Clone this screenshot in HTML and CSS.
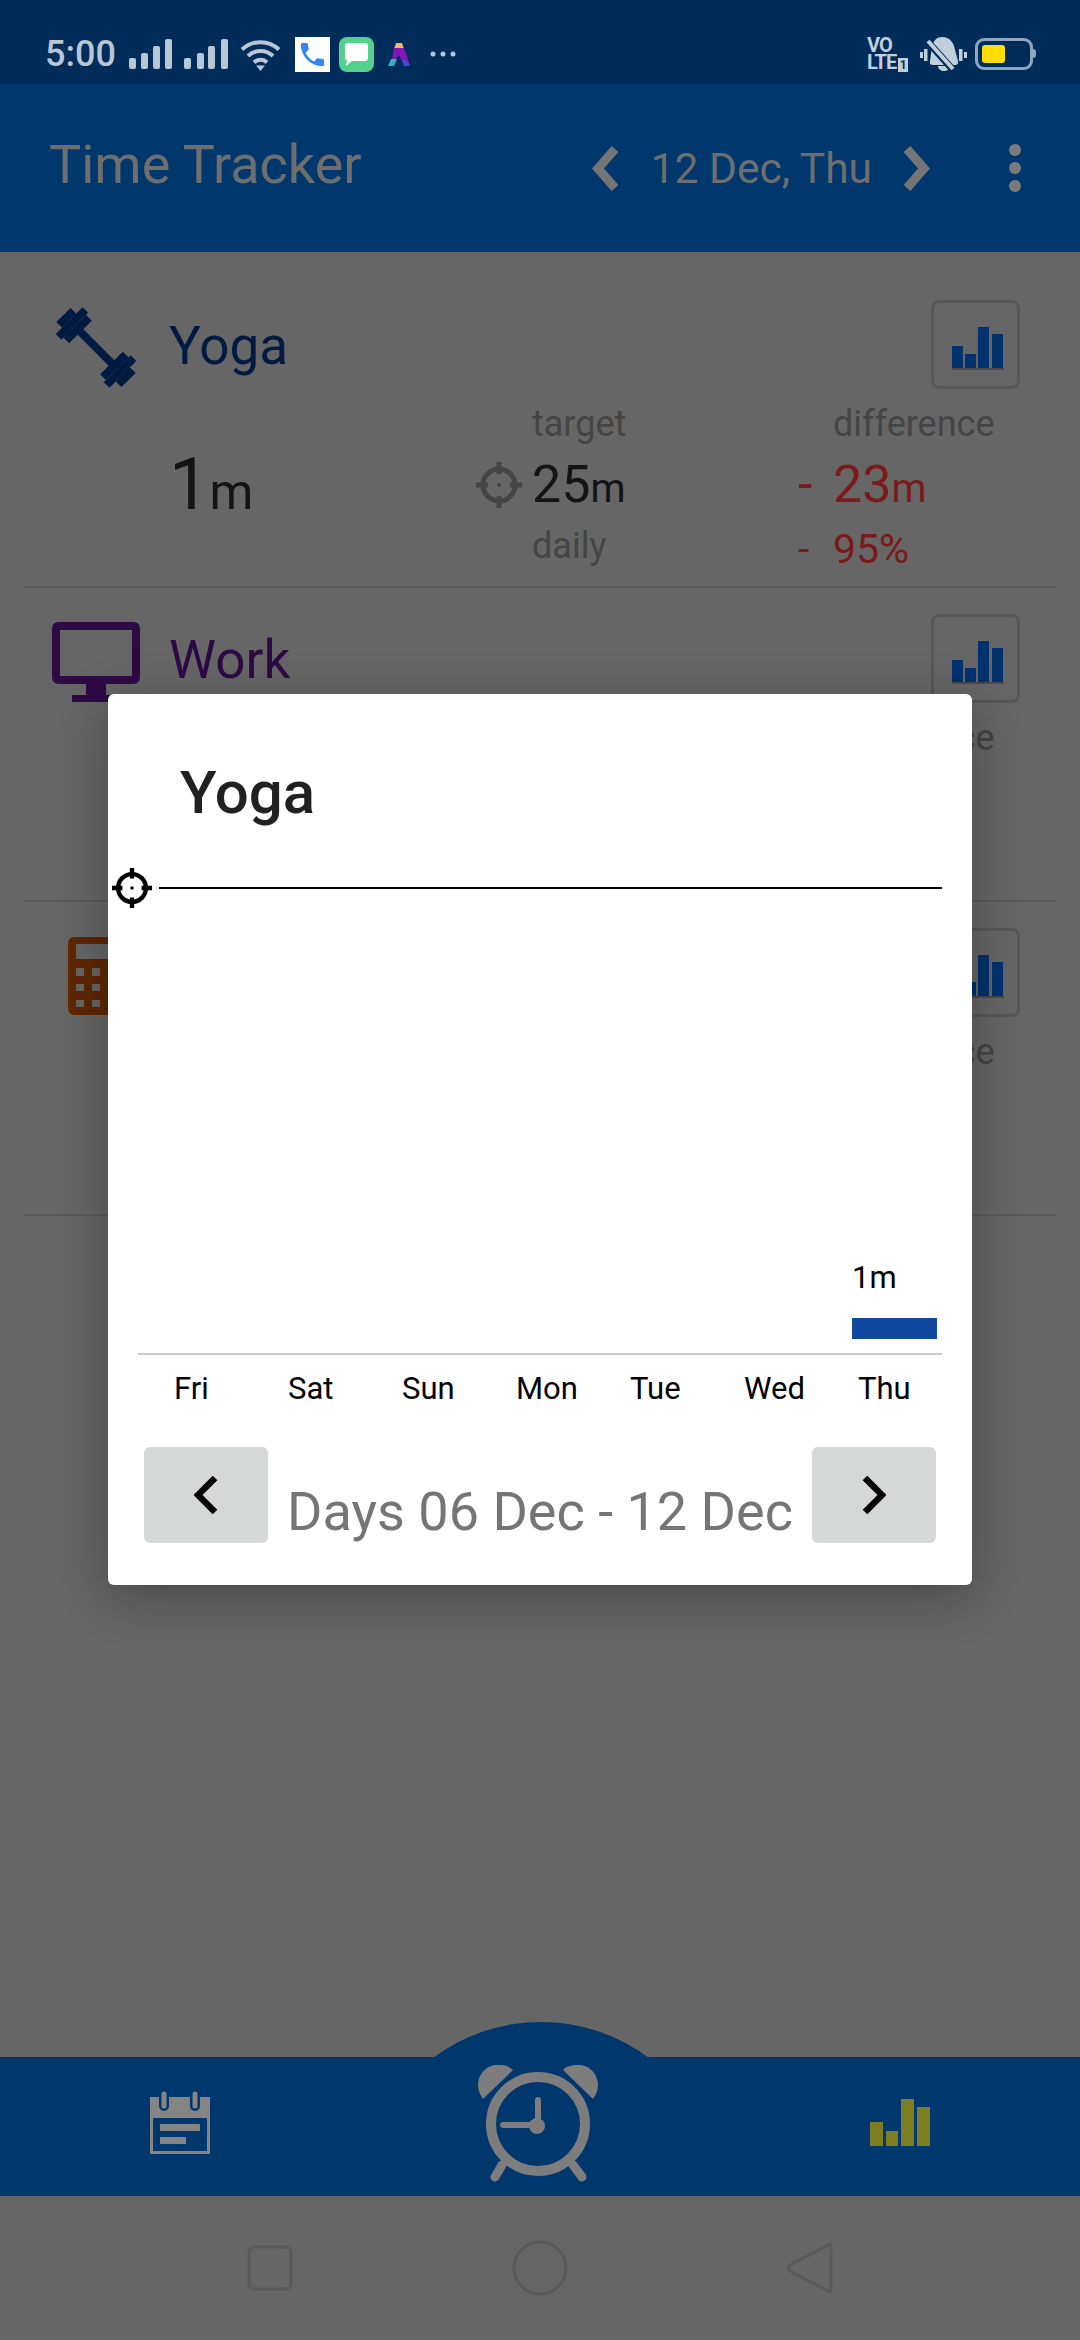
FILE: index.html
```html
<!DOCTYPE html>
<html lang="en">

<head>
  <meta charset="UTF-8">
  <meta name="viewport" content="width=device-width, initial-scale=1.0">
  <title>Time Tracker</title>
  <link rel="stylesheet" href="styles.css">
</head>

<body>
  <div class="status-bar">
    <span class="clock">5:00</span>
    <svg class="signal" width="43" height="30" viewBox="0 0 43 30">
      <rect x="0" y="19" width="7" height="11" rx="2" />
      <rect x="12" y="14" width="7" height="16" rx="2" />
      <rect x="24" y="7" width="7" height="23" rx="2" />
      <rect x="36" y="0" width="7" height="30" rx="2" />
    </svg>
    <svg class="signal second" width="44" height="30" viewBox="0 0 44 30">
      <rect x="0" y="19" width="7" height="11" rx="2" />
      <rect x="13" y="14" width="7" height="16" rx="2" />
      <rect x="24" y="7" width="7" height="23" rx="2" />
      <rect x="37" y="0" width="7" height="30" rx="2" />
    </svg>
    <svg class="wifi" width="41" height="33" viewBox="0 0 41 33">
      <g fill="none" stroke="#b9c6d6" stroke-width="4">
        <path d="M2 11.5 A27 27 0 0 1 39 11.5" />
        <path d="M8 18 A18 18 0 0 1 33 18" />
        <path d="M14 24.5 A9 9 0 0 1 27 24.5" />
      </g>
      <path d="M16 27.5 H25 L20.5 33 Z" fill="#b9c6d6" />
    </svg>
    <span class="app-icon phone">
      <svg width="31" height="31" viewBox="0 0 24 24">
        <path fill="#2f88f5" d="M6.62 10.79c1.44 2.83 3.76 5.14 6.59 6.59l2.2-2.2c.27-.27.67-.36 1.02-.24 1.12.37 2.33.57 3.57.57.55 0 1 .45 1 1V20c0 .55-.45 1-1 1-9.39 0-17-7.61-17-17 0-.55.45-1 1-1h3.5c.55 0 1 .45 1 1 0 1.25.2 2.45.57 3.57.11.35.03.74-.25 1.02l-2.2 2.2z" />
      </svg>
    </span>
    <span class="app-icon messages">
      <svg width="25" height="25" viewBox="0 0 25 25">
        <path fill="#fff" d="M4 1 H21 Q24 1 24 4 V16 Q24 19 21 19 H8 L2 24 L3 18.500 Q1 18 1 16 V4 Q1 1 4 1 Z" />
      </svg>
    </span>
    <svg class="app-logo" width="22" height="23" viewBox="0 0 22 23">
      <path d="M8 0 H14 L16 6 H6 Z" fill="#f4b860" />
      <path d="M6 5 H16 L22 22 H16 L11 12 L7 17 H4 Z" fill="#8316b8" />
      <path d="M3 16 H9 L6 23 H0 Z" fill="#2fb3c4" />
      <path d="M14 17 L18 17 L22 23 H16 Z" fill="#4a46d8" />
    </svg>
    <svg class="more" width="26" height="6" viewBox="0 0 26 6" fill="#b9c6d6">
      <circle cx="3" cy="3" r="2.500" />
      <circle cx="13" cy="3" r="2.500" />
      <circle cx="23" cy="3" r="2.500" />
    </svg>
    <div class="volte">VO<br>LTE<span class="sim">1</span></div>
    <svg class="mute" width="47" height="36" viewBox="0 0 47 36">
      <g fill="#c3cedb">
        <rect x="0" y="16" width="3" height="6" />
        <rect x="4" y="13" width="3.500" height="12" />
        <rect x="39" y="13" width="3.500" height="12" />
        <rect x="44" y="16" width="3" height="6" />
        <path d="M22 1 C30 1 34 7 35 14 L38 25 Q39 29 35 29 H13 Q9 29 10 25 L12 10 C14 4 17 1 22 1 Z" />
        <path d="M18 30 H30 C30 33 27 35 24 35 C21 35 18 33 18 30 Z" />
      </g>
      <path d="M9 7 L34 35" stroke="#002c5a" stroke-width="7" />
      <path d="M8 5 L33 33" stroke="#c3cedb" stroke-width="4" />
    </svg>
    <div class="battery"><div class="battery-fill"></div></div>
  </div>

  <header class="app-bar">
    <h1 class="app-title">Time Tracker</h1>
    <svg class="chevron prev-day" width="27" height="45" viewBox="0 0 27 45">
      <path d="M23 3 L6 22.500 L23 42" />
    </svg>
    <span class="day-label">12 Dec, Thu</span>
    <svg class="chevron next-day" width="27" height="45" viewBox="0 0 27 45">
      <path d="M4 3 L21 22.500 L4 42" />
    </svg>
    <svg class="overflow" width="12" height="48" viewBox="0 0 12 48" fill="#7b7b7b">
      <circle cx="6" cy="6" r="6" />
      <circle cx="6" cy="24" r="6" />
      <circle cx="6" cy="42" r="6" />
    </svg>
  </header>

  <main class="tasks">
    <section class="task">
      <div class="task-head">
        <svg class="task-icon" width="88" height="88" viewBox="0 0 88 88">
          <g fill="#001a42" transform="rotate(45 44 43.500)">
            <rect x="20" y="39.500" width="48" height="8" />
            <rect x="-2" y="33.500" width="8" height="20" />
            <rect x="6" y="24.500" width="8" height="38" />
            <rect x="14" y="27.500" width="8" height="32" />
            <rect x="66" y="27.500" width="8" height="32" />
            <rect x="74" y="24.500" width="8" height="38" />
            <rect x="82" y="33.500" width="8" height="20" />
          </g>
        </svg>
        <span class="task-name yoga">Yoga</span>
        <button class="chart-btn">
          <svg width="52" height="44" viewBox="0 0 52 44">
            <path fill="#003270" d="M0 19 H11 V41 H0 Z M13 27 H24 V41 H13 Z M26 0 H37 V41 H26 Z M40 7 H51 V41 H40 Z" />
            <rect x="0" y="41" width="52" height="2" fill="#4a4a4a" />
          </svg>
        </button>
      </div>
      <div class="stats">
        <span></span>
        <span></span>
        <span class="stat-label">target</span>
        <span></span>
        <span class="stat-label">difference</span>

        <span class="big-value">1<small>m</small></span>
        <svg class="target-icon dim" width="46" height="46" viewBox="0 0 46 46">
          <circle cx="23" cy="23" r="16" />
          <path d="M23 0 V12 M23 34 V46 M0 23 H12 M34 23 H46" />
          <circle class="dot" cx="23" cy="23" r="2" />
        </svg>
        <span class="value">25<small>m</small></span>
        <span class="value minus">-</span>
        <span class="value minus">23<small>m</small></span>

        <span></span>
        <span></span>
        <span class="stat-label">daily</span>
        <span class="percent">-</span>
        <span class="percent">95%</span>
      </div>
    </section>

    <section class="task">
      <div class="task-head">
        <svg class="task-icon" width="88" height="88" viewBox="0 0 88 88">
          <path fill="#2e0a45" fill-rule="evenodd" d="M7 4 H81 Q88 4 88 11 V58 Q88 66 81 66 H54 V77 H68 V84 H20 V77 H34 V66 H7 Q0 66 0 58 V11 Q0 4 7 4 Z M8 12 V58 H80 V12 Z" />
        </svg>
        <span class="task-name work">Work</span>
        <button class="chart-btn">
          <svg width="52" height="44" viewBox="0 0 52 44">
            <path fill="#003270" d="M0 19 H11 V41 H0 Z M13 27 H24 V41 H13 Z M26 0 H37 V41 H26 Z M40 7 H51 V41 H40 Z" />
            <rect x="0" y="41" width="52" height="2" fill="#4a4a4a" />
          </svg>
        </button>
      </div>
      <div class="stats">
        <span></span>
        <span></span>
        <span class="stat-label">target</span>
        <span></span>
        <span class="stat-label">difference</span>
      </div>
    </section>

    <section class="task">
      <div class="task-head">
        <svg class="task-icon" width="88" height="88" viewBox="0 0 88 88">
          <path fill="#5f2700" fill-rule="evenodd" d="M23 5 H73 Q80 5 80 12 V76 Q80 83 73 83 H23 Q16 83 16 76 V12 Q16 5 23 5 Z M24 12 V27 H72 V12 Z M24 36 V44 H32 V36 Z M40 36 V44 H48 V36 Z M56 36 V44 H64 V36 Z M24 52 V59 H32 V52 Z M40 52 V59 H48 V52 Z M56 52 V59 H64 V52 Z M24 68 V75 H32 V68 Z M40 68 V75 H48 V68 Z M56 68 V75 H64 V68 Z" />
        </svg>
        <span class="task-name calc"></span>
        <button class="chart-btn">
          <svg width="52" height="44" viewBox="0 0 52 44">
            <path fill="#003270" d="M0 19 H11 V41 H0 Z M13 27 H24 V41 H13 Z M26 0 H37 V41 H26 Z M40 7 H51 V41 H40 Z" />
            <rect x="0" y="41" width="52" height="2" fill="#4a4a4a" />
          </svg>
        </button>
      </div>
      <div class="stats">
        <span></span>
        <span></span>
        <span class="stat-label">target</span>
        <span></span>
        <span class="stat-label">difference</span>
      </div>
    </section>
  </main>

  <nav class="bottom-nav">
    <svg class="hump" width="216" height="37" viewBox="0 0 216 37">
      <path d="M0 37 A180 180 0 0 1 216 37 Z" fill="#00376c" />
    </svg>
    <svg class="nav-icon" width="60" height="63" viewBox="0 0 60 63">
      <rect x="0" y="6" width="60" height="57" fill="#858585" />
      <rect x="3" y="27" width="54" height="33" fill="#00376c" />
      <rect x="10" y="33" width="40" height="7" fill="#858585" />
      <rect x="10" y="46" width="26" height="7" fill="#858585" />
      <g fill="none" stroke-linecap="round">
        <path d="M14 3 V15 M45 3 V15" stroke="#00376c" stroke-width="10" />
        <path d="M14 3 V15 M45 3 V15" stroke="#858585" stroke-width="5" />
      </g>
    </svg>
    <svg class="nav-icon alarm" width="140" height="130" viewBox="0 0 140 130">
      <g fill="#7d7d7d">
        <path d="M13 42 L43 13 C38 8 33 8 27 8 C16 8 8 18 8 28 C8 33 10 38 13 42 Z" />
        <path d="M123 42 L93 13 C98 8 103 8 109 8 C120 8 128 18 128 28 C128 33 126 38 123 42 Z" />
        <circle cx="67" cy="69" r="8" />
      </g>
      <g fill="none" stroke="#7d7d7d" stroke-linecap="round">
        <circle cx="68" cy="67" r="47" stroke-width="10" />
        <path d="M68 43 V68 M33 68 H68" stroke-width="6" />
        <path d="M32 108 L25 120 M103 108 L112 120" stroke-width="9" />
      </g>
    </svg>
    <svg class="nav-icon" width="60" height="47" viewBox="0 0 60 47">
      <path fill="#7d7d23" d="M0 23 H13 V47 H0 Z M16 32 H28 V47 H16 Z M31 0 H44 V47 H31 Z M47 8 H60 V47 H47 Z" />
    </svg>
  </nav>

  <div class="system-nav">
    <svg width="46" height="46" viewBox="0 0 46 46"><rect x="2" y="2" width="42" height="42" rx="5" /></svg>
    <svg width="56" height="56" viewBox="0 0 56 56"><circle cx="28" cy="28" r="26" /></svg>
    <svg width="46" height="54" viewBox="0 0 46 54"><path d="M44 5 Q44 1 41 4 L3 24 Q0 27 3 30 L41 50 Q44 53 44 49 Z" /></svg>
  </div>

  <div class="dialog">
    <h2 class="dialog-title">Yoga</h2>
    <div class="target-row">
      <svg class="target-icon" width="40" height="40" viewBox="0 0 46 46">
        <circle cx="23" cy="23" r="16" />
        <path d="M23 0 V12 M23 34 V46 M0 23 H12 M34 23 H46" />
        <circle class="dot" cx="23" cy="23" r="2" />
      </svg>
      <div class="target-line"></div>
    </div>
    <div class="plot">
      <div class="bar-col">
        <div class="bar-label">1m</div>
        <div class="bar"></div>
      </div>
    </div>
    <div class="days">
      <span>Fri</span>
      <span>Sat</span>
      <span>Sun</span>
      <span>Mon</span>
      <span>Tue</span>
      <span>Wed</span>
      <span>Thu</span>
    </div>
    <div class="range">
      <button class="range-btn">
        <svg width="24" height="38" viewBox="0 0 24 38"><path d="M21 2 L4 19 L21 36" /></svg>
      </button>
      <span class="range-label">Days 06 Dec - 12 Dec</span>
      <button class="range-btn">
        <svg width="24" height="38" viewBox="0 0 24 38"><path d="M3 2 L20 19 L3 36" /></svg>
      </button>
    </div>
  </div>
</body>

</html>
```

FILE: styles.css
```css
* {
  box-sizing: border-box;
}

body {
  margin: 0;
  width: 1080px;
  height: 2340px;
  display: flex;
  flex-direction: column;
  position: relative;
  overflow: hidden;
  background-color: #666;
  font-family: Roboto, "Liberation Sans", sans-serif;
}

/* status bar */
.status-bar {
  height: 84px;
  padding-top: 24px;
  display: flex;
  align-items: center;
  background-color: #002c5a;
  color: #b9c6d6;
}

.clock {
  margin-left: 45px;
  font-size: 36px;
  font-weight: 500;
  width: 84px;
}

.signal {
  fill: #b9c6d6;
}

.signal.second {
  margin-left: 12px;
}

.wifi {
  margin-left: 12px;
}

.app-icon {
  width: 35px;
  height: 35px;
  margin-left: 14px;
  display: flex;
  align-items: center;
  justify-content: center;
}

.app-icon.phone {
  background-color: #fff;
}

.app-icon.messages {
  margin-left: 9px;
  background-color: #52d08c;
  border-radius: 8px;
}

.app-logo {
  margin-left: 14px;
}

.more {
  margin-left: 20px;
}

.volte {
  margin-left: auto;
  width: 44px;
  white-space: nowrap;
  font-size: 20px;
  font-weight: 700;
  line-height: 17px;
  letter-spacing: -1px;
  color: #c3cedb;
}

.sim {
  display: inline-block;
  margin-left: 2px;
  width: 10px;
  height: 14px;
  line-height: 14px;
  font-size: 12px;
  text-align: center;
  letter-spacing: 0;
  color: #002c5a;
  background-color: #c3cedb;
}

.mute {
  margin-left: 9px;
}

.battery {
  margin: 0 47px 0 8px;
  width: 58px;
  height: 32px;
  padding: 4px;
  border: 3px solid #8fa5c0;
  border-radius: 9px;
  position: relative;
}

.battery::after {
  content: '';
  position: absolute;
  right: -6px;
  top: 8px;
  width: 3px;
  height: 9px;
  border-radius: 0 3px 3px 0;
  background-color: #8fa5c0;
}

.battery-fill {
  width: 23px;
  height: 100%;
  border-radius: 3px;
  background-color: #ffdd00;
}

/* app bar */
.app-bar {
  height: 168px;
  padding: 0 59px 0 49px;
  display: flex;
  align-items: center;
  background-color: #00376c;
  color: #6e6e6e;
}

.app-title {
  margin: 0 auto 8px 0;
  font-size: 54px;
  font-weight: 400;
}

.chevron path {
  fill: none;
  stroke: #757575;
  stroke-width: 9;
}

.day-label {
  margin: 0 31px 0 32px;
  font-size: 42.5px;
}

.overflow {
  margin-left: 79px;
}

/* task list */
.tasks {
  flex: 1;
  padding-top: 22px;
}

.task {
  height: 314px;
  margin: 0 24px;
  padding: 26px 36px 0 28px;
  border-bottom: 2px solid #5b5b5b;
}

.task-head {
  display: flex;
  align-items: flex-start;
}

.task-icon {
  margin: 4px 29px 0 0;
}

.task-name {
  margin-top: 16px;
  font-size: 53px;
  line-height: 60px;
}

.yoga {
  color: #001a42;
}

.work {
  color: #2e0a45;
}

.chart-btn {
  margin-left: auto;
  width: 89px;
  height: 89px;
  padding: 12px 0 0 4px;
  background: none;
  border: 3px solid #585858;
  border-radius: 8px;
}

.stats {
  margin: 10px 0 0 117px;
  display: grid;
  grid-template-columns: 307px 56px 266px 35px 1fr;
  grid-template-rows: 44px 70px 44px;
  row-gap: 4px;
  align-items: start;
}

.stat-label {
  font-size: 36px;
  line-height: 44px;
  color: #454545;
}

.value {
  font-size: 52px;
  line-height: 70px;
  color: #141414;
}

.value small {
  font-size: 40px;
}

.big-value {
  font-size: 72px;
  line-height: 70px;
  color: #141414;
}

.big-value small {
  font-size: 50px;
}

.value.minus {
  color: #7a1a1a;
}

.percent {
  padding-top: 3px;
  font-size: 41px;
  line-height: 44px;
  color: #7a1a1a;
}

.target-icon {
  fill: none;
  stroke: #000;
  stroke-width: 5;
}

.target-icon .dot {
  fill: #000;
  stroke: none;
}

.target-icon.dim {
  margin-top: 12px;
  stroke: #454545;
}

.target-icon.dim .dot {
  fill: #454545;
}

/* bottom navigation */
.bottom-nav {
  height: 139px;
  padding-bottom: 14px;
  display: grid;
  grid-template-columns: repeat(3, 1fr);
  place-items: center;
  position: relative;
  background-color: #00376c;
}

.hump {
  position: absolute;
  left: 433px;
  top: -36px;
}

.nav-icon {
  position: relative;
}

.system-nav {
  height: 144px;
  padding: 0 135px;
  display: grid;
  grid-template-columns: repeat(3, 1fr);
  place-items: center;
}

.system-nav svg {
  fill: none;
  stroke: #5a5a5a;
  stroke-width: 3;
}

/* chart dialog */
.dialog {
  position: absolute;
  left: 108px;
  top: 694px;
  width: 864px;
  height: 891px;
  padding-top: 67px;
  background-color: #fff;
  border-radius: 6px;
  box-shadow: 0 11px 50px rgba(0, 0, 0, 0.3);
}

.dialog-title {
  margin: 0 0 43px 72px;
  font-size: 60px;
  font-weight: 500;
  line-height: 64px;
  color: #212121;
}

.target-row {
  display: flex;
  align-items: center;
  margin: 0 30px 0 4px;
  gap: 7px;
}

.target-line {
  flex: 1;
  height: 2px;
  background-color: #000;
}

.plot {
  height: 447px;
  margin: 0 30px;
  padding: 0 5px 14px 0;
  display: flex;
  justify-content: flex-end;
  align-items: flex-end;
  border-bottom: 2px solid #ccc;
}

.bar-label {
  margin-bottom: 23px;
  font-size: 31px;
  line-height: 34px;
  color: #000;
}

.bar {
  width: 85px;
  height: 21px;
  background-color: #0f47a1;
}

.days {
  margin: 16px 0 40px 66px;
  display: grid;
  grid-template-columns: repeat(7, 114px);
  font-size: 31px;
  line-height: 36px;
  color: #000;
}

.range {
  margin: 0 36px;
  display: flex;
  align-items: flex-end;
  justify-content: space-between;
}

.range-btn {
  width: 124px;
  height: 96px;
  padding: 0;
  border: none;
  border-radius: 6px;
  background-color: #d6d7d7;
  display: flex;
  align-items: center;
  justify-content: center;
}

.range-btn path {
  fill: none;
  stroke: #000;
  stroke-width: 6.5;
}

.range-label {
  margin-bottom: 1px;
  font-size: 54px;
  line-height: 60px;
  color: #757575;
}
```
